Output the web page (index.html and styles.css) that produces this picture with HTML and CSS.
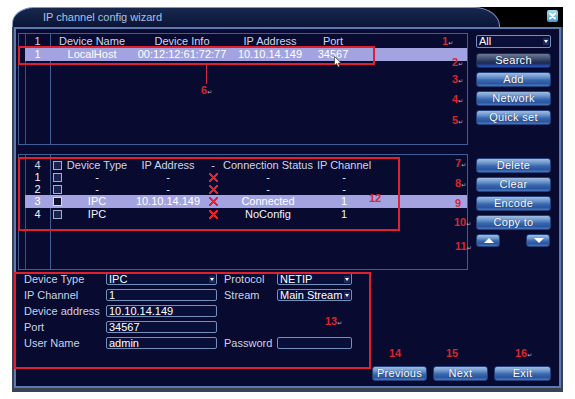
FILE: index.html
```html
<!DOCTYPE html>
<html>
<head>
    <title>IP channel config wizard</title>
    <link rel="stylesheet" href="styles.css">
</head>
<body>
<div class="page">
    <div class="window">
        <div class="titlebar">
            <div class="tab">IP channel config wizard</div>
            <div class="title-rest">
                <span class="close">
                    <svg width="11" height="12" viewBox="0 0 11 12"><path d="M3 3.5 L8 8.5 M8 3.5 L3 8.5" stroke="#fff" stroke-width="1.8" stroke-linecap="round"/></svg>
                </span>
            </div>
        </div>
        <div class="frame">
            <div class="body">
                <!-- searched devices -->
                <div class="row row-top">
                    <div class="list">
                        <div class="grid grid-devices head">
                            <span>1</span><span>Device Name</span><span>Device Info</span><span>IP Address</span><span>Port</span><span></span>
                        </div>
                        <div class="grid grid-devices item selected tall">
                            <span>1</span><span>LocalHost</span><span>00:12:12:61:72:77</span><span>10.10.14.149</span><span>34567</span><span></span>
                        </div>
                    </div>
                    <div class="side">
                        <div class="select side-select">All<i class="drop"></i></div>
                        <button class="btn focus">Search</button>
                        <button class="btn">Add</button>
                        <button class="btn">Network</button>
                        <button class="btn">Quick set</button>
                    </div>
                </div>

                <!-- added channels -->
                <div class="row row-mid">
                    <div class="list list-channels">
                        <div class="grid grid-channels head">
                            <span>4</span><span><i class="cb"></i></span><span>Device Type</span><span>IP Address</span><span>-</span><span>Connection Status</span><span>IP Channel</span><span></span>
                        </div>
                        <div class="grid grid-channels item">
                            <span>1</span><span><i class="cb"></i></span><span>-</span><span>-</span><span><i class="x"></i></span><span>-</span><span>-</span><span></span>
                        </div>
                        <div class="grid grid-channels item">
                            <span>2</span><span><i class="cb"></i></span><span>-</span><span>-</span><span><i class="x"></i></span><span>-</span><span>-</span><span></span>
                        </div>
                        <div class="grid grid-channels item selected tall">
                            <span>3</span><span><i class="cb on"></i></span><span>IPC</span><span>10.10.14.149</span><span><i class="x"></i></span><span>Connected</span><span>1</span><span></span>
                        </div>
                        <div class="grid grid-channels item">
                            <span>4</span><span><i class="cb"></i></span><span>IPC</span><span></span><span><i class="x"></i></span><span>NoConfig</span><span>1</span><span></span>
                        </div>
                    </div>
                    <div class="side side-low">
                        <button class="btn">Delete</button>
                        <button class="btn">Clear</button>
                        <button class="btn">Encode</button>
                        <button class="btn">Copy to</button>
                        <div class="arrows">
                            <button class="btn arrow"><i class="tri up"></i></button>
                            <button class="btn arrow"><i class="tri down"></i></button>
                        </div>
                    </div>
                </div>

                <!-- channel settings -->
                <div class="row row-bottom">
                    <div class="form">
                        <span class="lbl">Device Type</span>
                        <div class="field select">IPC<i class="drop"></i></div>
                        <span class="lbl lbl2">Protocol</span>
                        <div class="field select">NETIP<i class="drop"></i></div>

                        <span class="lbl">IP Channel</span>
                        <div class="field">1</div>
                        <span class="lbl lbl2">Stream</span>
                        <div class="field select">Main Stream<i class="drop"></i></div>

                        <span class="lbl">Device address</span>
                        <div class="field">10.10.14.149</div>
                        <span></span><span></span>

                        <span class="lbl">Port</span>
                        <div class="field">34567</div>
                        <span></span><span></span>

                        <span class="lbl">User Name</span>
                        <div class="field">admin</div>
                        <span class="lbl lbl2">Password</span>
                        <div class="field"></div>
                    </div>
                    <div class="nav">
                        <button class="btn nav-btn">Previous</button>
                        <button class="btn nav-btn">Next</button>
                        <button class="btn nav-btn">Exit</button>
                    </div>
                </div>
            </div>
        </div>
    </div>

    <!-- manual annotations drawn over the screenshot -->
    <div class="mark-box" style="left:18px;top:46px;width:357px;height:19px"></div>
    <div class="mark-line" style="left:206px;top:65px;height:19px"></div>
    <div class="mark-box" style="left:18px;top:157px;width:382px;height:74px"></div>
    <div class="mark-box" style="left:14px;top:272px;width:357px;height:97px"></div>

    <span class="num" style="left:442px;top:35px">1<i class="ret">↵</i></span>
    <span class="num" style="left:452px;top:56px">2<i class="ret">↵</i></span>
    <span class="num" style="left:452px;top:73px">3<i class="ret">↵</i></span>
    <span class="num" style="left:452px;top:93px">4<i class="ret">↵</i></span>
    <span class="num" style="left:452px;top:114px">5<i class="ret">↵</i></span>
    <span class="num" style="left:201px;top:84px">6<i class="ret">↵</i></span>
    <span class="num" style="left:455px;top:157px">7<i class="ret">↵</i></span>
    <span class="num" style="left:455px;top:177px">8<i class="ret">↵</i></span>
    <span class="num" style="left:455px;top:197px">9</span>
    <span class="num" style="left:454px;top:216px">10<i class="ret">↵</i></span>
    <span class="num" style="left:455px;top:240px">11<i class="ret">↵</i></span>
    <span class="num" style="left:369px;top:192px">12</span>
    <span class="num" style="left:325px;top:315px">13<i class="ret">↵</i></span>
    <span class="num" style="left:389px;top:347px">14</span>
    <span class="num" style="left:446px;top:347px">15</span>
    <span class="num" style="left:515px;top:347px">16<i class="ret">↵</i></span>

    <svg class="cursor" width="8" height="12" viewBox="0 0 8 12"><path d="M0.5 0.5 L0.5 9.5 L2.6 7.6 L4.2 11 L5.6 10.3 L4.1 7.1 L7 7 Z" fill="#fff" stroke="#222" stroke-width="0.6"/></svg>
</div>
</body>
</html>
```

FILE: styles.css
```css
body {
    margin: 0;
    background-color: #fff;
    font-family: "Liberation Sans", Arial, sans-serif;
    font-size: 11px;
}
.page {
    position: relative;
    width: 575px;
    height: 399px;
    padding: 7px 0 0 12px;
    box-sizing: border-box;
}
.window {
    width: 551px;
}
.titlebar {
    display: flex;
    height: 20px;
    background: linear-gradient(to right, transparent 30px, #000 30px);
}
.tab {
    width: 488px;
    box-sizing: border-box;
    border: 1px solid #7d98c4;
    border-bottom: 0;
    border-radius: 22px 26px 0 0 / 16px 19px 0 0;
    background: linear-gradient(#18284f, #0b1437);
    color: #a9c0e6;
    padding: 3px 0 0 30px;
    line-height: 13px;
}
.title-rest {
    flex: 1;
    display: flex;
    justify-content: flex-end;
    padding: 3px 5px 0 0;
}
.close {
    width: 11px;
    height: 12px;
    border-radius: 2px;
    background: linear-gradient(#a8dcf4, #4a9ad0);
}
.close svg {
    display: block;
}
.frame {
    border: 2px solid #3a4152;
    border-top: 0;
    border-bottom-width: 4px;
}
.body {
    border: 2px solid #5b7bb0;
    background-color: #080b2f;
    padding: 4px 8px 5px 2px;
}
.row {
    display: flex;
}
.row-top {
    gap: 8px;
    height: 112px;
}
.row-mid {
    gap: 8px;
    height: 116px;
    margin-top: 9px;
}
.row-bottom {
    height: 108px;
    margin-top: 3px;
}
.list {
    width: 450px;
    box-sizing: border-box;
    border: 1px solid #3f5f94;
    padding: 1px 0 0 6px;
    background:
        linear-gradient(to right, transparent 6px, #34508a 6px, #34508a 7px, transparent 7px, transparent 31px, #3f5f94 31px, #3f5f94 32px, transparent 32px);
}
.list-channels {
    padding-top: 4px;
}
.grid {
    display: grid;
    height: 12px;
    line-height: 12px;
    text-align: center;
    color: #f2f4ff;
    white-space: nowrap;
}
.grid.head {
    color: #cdd5ec;
}
.grid.tall {
    height: 13px;
    line-height: 13px;
}
.grid-devices {
    grid-template-columns: 25px 84px 96px 80px 46px 1fr;
}
.grid-devices.tall {
    margin-top: 1px;
}
.grid-channels {
    grid-template-columns: 25px 14px 66px 76px 14px 96px 56px 1fr;
}
.grid-channels.head {
    margin-bottom: 0;
}
.selected {
    background-color: #a2a3e0;
    color: #fff;
}
.cb {
    display: inline-block;
    width: 7px;
    height: 7px;
    border: 1px solid #a6aec8;
    background-color: #1b2252;
    vertical-align: -1px;
}
.cb.on {
    background-color: #10122e;
    border-color: #d8dcf0;
}
.x {
    display: inline-block;
    width: 9px;
    height: 9px;
    vertical-align: -1px;
    background:
        linear-gradient(45deg, transparent 40%, #e8222c 40%, #e8222c 60%, transparent 60%),
        linear-gradient(-45deg, transparent 40%, #e8222c 40%, #e8222c 60%, transparent 60%);
}
.side {
    width: 75px;
    display: flex;
    flex-direction: column;
    gap: 4px;
    padding-top: 2px;
}
.side-low {
    padding-top: 4px;
}
.side-select {
    height: 13px;
    margin-bottom: 1px;
}
.select, .field {
    position: relative;
    box-sizing: border-box;
    border: 1px solid #7090c0;
    border-radius: 2px;
    background-color: #0a0f3a;
    color: #fff;
    padding-left: 2px;
    line-height: 11px;
}
.drop {
    position: absolute;
    right: 1px;
    top: 2px;
    width: 6px;
    height: 7px;
    background-color: #1e2a5c;
}
.drop::after {
    content: "";
    position: absolute;
    left: 1px;
    top: 2px;
    border-left: 2px solid transparent;
    border-right: 2px solid transparent;
    border-top: 3px solid #fff;
}
.btn {
    display: block;
    width: 75px;
    height: 15px;
    padding: 0;
    border: 1px solid #22407a;
    border-radius: 3px;
    background: linear-gradient(#a0bde4 0%, #6d96cc 30%, #3a68b0 55%, #2a559e 80%, #4a78c0 100%);
    color: #fff;
    font-family: "Liberation Sans", Arial, sans-serif;
    font-size: 11px;
    line-height: 13px;
    letter-spacing: 0.3px;
    text-shadow: 0 0 1px #1d2f5c;
}
.btn.focus {
    background: linear-gradient(#6a7a96 0%, #3c4a6c 40%, #1c2850 70%, #2a58c8 100%);
    border-color: #1a2a50;
}
.arrows {
    display: flex;
    justify-content: space-between;
    padding-right: 1px;
}
.btn.arrow {
    width: 24px;
    height: 13px;
    position: relative;
}
.tri {
    position: absolute;
    left: 7px;
    width: 0;
    height: 0;
    border-left: 5px solid transparent;
    border-right: 5px solid transparent;
}
.tri.up {
    top: 3px;
    border-bottom: 5px solid #fff;
}
.tri.down {
    top: 3px;
    border-top: 5px solid #fff;
}
.form {
    display: grid;
    grid-template-columns: 82px 111px 60px 75px;
    grid-auto-rows: 12px;
    row-gap: 4px;
    padding-left: 6px;
    align-self: flex-start;
}
.lbl {
    color: #c9d1ea;
    line-height: 12px;
    white-space: nowrap;
}
.lbl2 {
    padding-left: 7px;
}
.nav {
    margin-left: auto;
    align-self: flex-end;
    display: flex;
    gap: 6px;
}
.btn.nav-btn {
    width: 55px;
}
.nav-btn:last-child {
    width: 57px;
}
.mark-box {
    position: absolute;
    box-sizing: border-box;
    border: 2px solid #e0202c;
}
.mark-line {
    position: absolute;
    width: 1px;
    background-color: #d82a34;
}
.num {
    position: absolute;
    color: #d8262e;
    font-weight: bold;
    font-size: 11px;
    line-height: 12px;
    white-space: nowrap;
}
.ret {
    font-style: normal;
    font-weight: normal;
    font-family: "DejaVu Sans", sans-serif;
    font-size: 6px;
    color: #b8b0b8;
}
.cursor {
    position: absolute;
    left: 334px;
    top: 56px;
}
```
